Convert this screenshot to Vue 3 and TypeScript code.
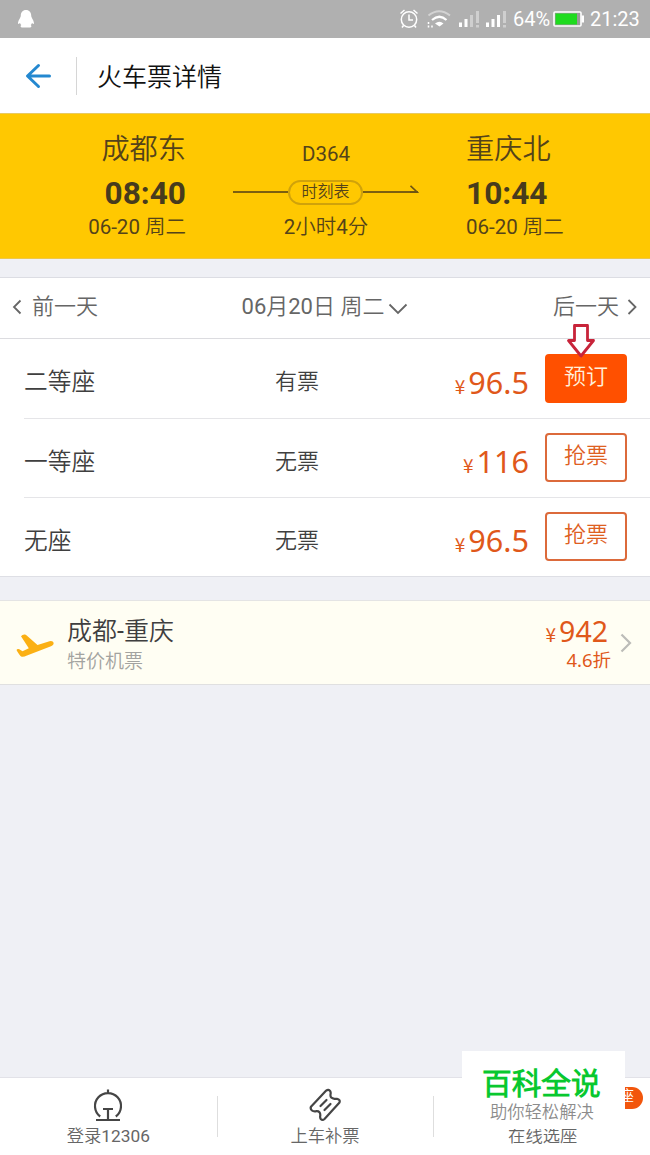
<script setup lang="ts">
interface Seat {
  name: string
  stock: string
  price: string
  action: string
  primary: boolean
}

const seats: Seat[] = [
  { name: '二等座', stock: '有票', price: '96.5', action: '预订', primary: true },
  { name: '一等座', stock: '无票', price: '116', action: '抢票', primary: false },
  { name: '无座', stock: '无票', price: '96.5', action: '抢票', primary: false },
]
</script>

<template>
  <div class="screen">
    <div class="status">
      <svg class="penguin" width="16" height="18" viewBox="0 0 16 18">
        <path d="M8 0C4.600 0 2.800 2.500 2.800 5.500C2.800 8 0 10 0 13.500C.4 14.500 1.500 13.500 2 13C2.300 14 2.800 14.600 3.300 15C2 16 2.600 17.500 4 17.500H12C13.400 17.500 14 16 12.700 15C13.200 14.600 13.700 14 14 13C14.500 13.500 15.600 14.500 16 13.500C16 10 13.200 8 13.200 5.500C13.200 2.500 11.400 0 8 0Z" fill="#fff" />
      </svg>
      <svg class="signals" width="110" height="22" viewBox="0 0 110 22" fill="none" stroke="#fff">
        <g stroke-width="1.500">
          <circle cx="10" cy="11.500" r="7.700" />
          <path d="M10 6.500V12H14M1.500 5.500L5.500 2M18.500 5.500L14.500 2M4.500 17.500L3 19.500M15.500 17.500L17 19.500" />
        </g>
        <path d="M29.500 7.500Q40 -1 51 7.500" stroke-width="2" opacity=".45" />
        <path d="M33 12Q40.500 5.500 47.500 12" stroke-width="2.200" />
        <path d="M36 15.500Q40.500 12 44.500 15.500L40.500 18.500Z" fill="#fff" stroke="none" />
        <path d="M29.500 14V16M29.500 17.500V19.500M33 17.500V19.500" stroke-width="1.500" />
        <path d="M61.500 19V14.500M67 19V11" stroke-width="3" />
        <path d="M72.500 19V7M78.500 15V3M78.500 17V19.500" stroke-width="3" opacity=".4" />
        <path d="M88.500 19V14.500M94 19V11M99.500 19V7" stroke-width="3" />
        <path d="M105.500 15V3M105.500 17V19.500" stroke-width="3" opacity=".4" />
      </svg>
      <span class="percent">64%</span>
      <svg class="battery" width="32" height="18" viewBox="0 0 32 18">
        <rect x="1" y="2" width="27" height="14" rx="1" fill="#999" stroke="#fff" stroke-width="1.600" />
        <rect x="2.500" y="3.500" width="21.500" height="11" fill="#1edb1e" />
        <rect x="28.500" y="5.500" width="2.500" height="7" fill="#fff" />
      </svg>
      <span class="clock">21:23</span>
    </div>

    <header class="header">
      <svg class="back" width="26" height="26" viewBox="0 0 26 26" fill="none" stroke="#2488d0" stroke-width="3" stroke-linecap="round" stroke-linejoin="round">
        <path d="M24.500 13H3M13.500 2.500L2.500 13L13.500 23.500" />
      </svg>
      <i class="header-line"></i>
      <h1>火车票详情</h1>
    </header>

    <section class="trip">
      <div class="stop from">
        <div class="city">成都东</div>
        <div class="time">08:40</div>
        <div class="date">06-20 周二</div>
      </div>
      <div class="route">
        <div class="train">D364</div>
        <div class="track">
          <i class="line"></i>
          <span class="timetable">时刻表</span>
          <i class="line"></i>
          <svg class="tip" width="9" height="10" viewBox="0 0 9 10" fill="none" stroke="#6e5412" stroke-width="1.700">
            <path d="M0.500 0.800L7.300 7.200H0" />
          </svg>
        </div>
        <div class="duration">2小时4分</div>
      </div>
      <div class="stop to">
        <div class="city">重庆北</div>
        <div class="time">10:44</div>
        <div class="date">06-20 周二</div>
      </div>
    </section>

    <nav class="days">
      <span class="day">
        <svg width="10" height="16" viewBox="0 0 10 16"><path d="M8.500 1.500L2 8L8.500 14.500" /></svg>
        <span class="prev">前一天</span>
      </span>
      <span class="day today">
        <span>06月20日 周二</span>
        <svg width="20" height="12" viewBox="0 0 20 12"><path d="M1.500 1.500L10 10L18.500 1.500" /></svg>
      </span>
      <span class="day">
        <span class="next">后一天</span>
        <svg width="10" height="16" viewBox="0 0 10 16"><path d="M1.500 1L8.500 8L1.500 15" /></svg>
      </span>
    </nav>

    <ul class="seats">
      <li v-for="seat in seats" :key="seat.name" class="seat">
        <span class="seat-name">{{ seat.name }}</span>
        <span class="stock">{{ seat.stock }}</span>
        <span class="price"><small>¥</small>{{ seat.price }}</span>
        <button :class="['action', { primary: seat.primary }]">{{ seat.action }}</button>
        <svg v-if="seat.primary" class="pointer" width="30" height="36" viewBox="0 0 30 36">
          <path d="M8.500 2.500H21.500V17.500H27.500L15 33L2.500 17.500H8.500Z" fill="#fff" stroke="#c8243a" stroke-width="2.800" stroke-linejoin="round" />
        </svg>
      </li>
    </ul>

    <section class="flight">
      <svg class="plane" width="38" height="24" viewBox="0 0 38 24" fill="#fbb014">
        <path d="M5 2.200Q6.500 .3 9 .6Q10.200 .8 11 1.800L21.500 11L33.500 7.200Q37 6.500 37.600 8.800Q38 11 35 12.200L11 21.500Q7 23.500 5.200 22.500Q4 22 .7 16.500Q.3 15.300 1.800 15Q3 14.700 4.500 16L6.500 17.300L12.800 14.300Z" />
      </svg>
      <div class="flight-info">
        <div class="flight-route">成都-重庆</div>
        <div class="flight-note">特价机票</div>
      </div>
      <div class="flight-cost">
        <div class="flight-price"><small>¥</small>942</div>
        <div class="discount">4.6折</div>
      </div>
      <svg class="more" width="12" height="20" viewBox="0 0 12 20" fill="none" stroke="#bcbcb8" stroke-width="2.200">
        <path d="M1.500 1.500L10 10L1.500 18.500" />
      </svg>
    </section>

    <footer class="tabs">
      <div class="tab">
        <svg width="32" height="34" viewBox="0 0 32 34" fill="none" stroke="#454545" stroke-width="2.200">
          <path d="M8.200 28.500A13 13 0 1 1 23.800 28.500M16 1.500V5M11 21H21M16 21V32M4 32H28" />
        </svg>
        <span>登录12306</span>
      </div>
      <div class="tab">
        <svg width="32" height="34" viewBox="0 0 32 34" fill="none" stroke="#454545" stroke-width="2.200" stroke-linejoin="round" stroke-linecap="round">
          <path d="M17.200 2.600Q19.500 .8 21.200 3.200Q22 4.500 21.500 6.500Q21 10.500 25.500 10.800H28Q31.500 11.500 30.500 14.500L15.500 31Q13.500 32.800 11.700 31Q10.800 29.500 11.300 27.500Q11.500 23 7.500 23.200Q4.500 23.800 3 22.500Q.8 20.500 2.200 18.500Z" />
          <path d="M11.500 18L17.500 12M15.500 22L21.500 16" />
        </svg>
        <span>上车补票</span>
      </div>
      <div class="tab pick">
        <span>在线选座</span>
        <b class="badge">选座</b>
      </div>
    </footer>

    <aside class="brand">
      <strong>百科全说</strong>
      <span>助你轻松解决</span>
    </aside>
  </div>
</template>

<style>
body {
  margin: 0;
}
</style>

<style scoped>
.screen {
  position: relative;
  box-sizing: border-box;
  width: 650px;
  height: 1155px;
  overflow: hidden;
  display: flex;
  flex-direction: column;
  background: #eff0f5;
  color: #3f3f3f;
  font-family: Roboto, "Noto Sans CJK SC DemiLight", "Noto Sans CJK SC", sans-serif;
}
.screen svg {
  flex: none;
}
.status {
  height: 38px;
  display: flex;
  align-items: center;
  background: #b0b0b0;
  color: #fff;
  font-size: 20px;
  line-height: 38px;
}
.penguin {
  margin-left: 18px;
}
.signals {
  margin-left: 365px;
}
.percent {
  width: 38px;
  margin-left: 4px;
}
.battery {
  margin-left: 2px;
}
.clock {
  margin-left: 5px;
}
.header {
  height: 76px;
  box-sizing: border-box;
  display: flex;
  align-items: center;
  background: #fff;
  border-bottom: 1px solid #e8ca62;
}
.back {
  margin-left: 25px;
}
.header-line {
  width: 1px;
  height: 38px;
  margin-left: 25px;
  background: #d6d6d6;
}
h1 {
  margin: 0 0 0 20px;
  padding-top: 4px;
  font-size: 25px;
  font-weight: 400;
  line-height: 36px;
  color: #111;
}
.trip {
  height: 145px;
  box-sizing: border-box;
  display: flex;
  background: #ffc801;
  color: #54431a;
  border-bottom: 1px solid #edc74a;
}
.stop {
  padding-top: 16px;
}
.from {
  width: 186px;
  text-align: right;
}
.to {
  margin-left: 47px;
}
.city {
  font-size: 28.2px;
  line-height: 40px;
}
.time {
  padding-top: 5px;
  font-size: 31.6px;
  font-weight: 700;
  line-height: 38px;
  color: #473b1d;
}
.date {
  font-size: 20.5px;
  line-height: 28px;
}
.route {
  width: 186px;
  margin-left: 47px;
  padding-top: 26px;
  text-align: center;
  font-size: 20.5px;
  line-height: 28px;
}
.track {
  height: 24px;
  margin-top: 12px;
  display: flex;
  align-items: center;
}
.line {
  flex: 1;
  height: 2px;
  background: #7c5f10;
}
.timetable {
  width: 71px;
  height: 21px;
  border: 2px solid #d0a20a;
  border-radius: 13px;
  font-size: 16px;
  line-height: 19px;
}
.tip {
  margin: -5px 0 0 -8px;
}
.duration {
  padding-top: 9px;
}
.days {
  height: 62px;
  box-sizing: border-box;
  margin-top: 18px;
  padding: 0 13px 2px 12px;
  display: flex;
  justify-content: space-between;
  align-items: center;
  background: #fff;
  border-top: 1px solid #dcdde3;
  border-bottom: 1px solid #dcdce0;
  color: #666;
  font-size: 22px;
  line-height: 30px;
}
.day {
  display: flex;
  align-items: center;
}
.day path {
  fill: none;
  stroke: #666;
  stroke-width: 1.800;
}
.prev {
  margin-left: 10px;
}
.next {
  margin-right: 8px;
}
.today {
  gap: 4px;
  padding-right: 1px;
}
.today svg {
  margin-top: 3px;
}
.seats {
  margin: 0;
  padding: 0;
  list-style: none;
  background: #fff;
  border-bottom: 1px solid #dedfe5;
}
.seat {
  position: relative;
  height: 79px;
  box-sizing: border-box;
  margin-left: 24px;
  padding-right: 23px;
  display: flex;
  align-items: center;
  border-bottom: 1px solid #e5e5e8;
}
.seat:first-child {
  height: 80px;
}
.seat:last-child {
  height: 78px;
  border-bottom: 0;
}
.seat-name {
  width: 251px;
  padding-top: 7px;
  font-size: 23.7px;
  line-height: 32px;
}
.stock {
  width: 100px;
  padding-top: 7px;
  font-size: 22px;
  line-height: 32px;
}
.price {
  flex: 1;
  padding: 10px 16px 0 0;
  text-align: right;
  font-family: "Noto Sans", "Noto Sans CJK SC", sans-serif;
  font-size: 30.6px;
  line-height: 36px;
  color: #e0581a;
}
.price small,
.flight-price small {
  margin-right: 3px;
  font-family: "Noto Sans CJK SC", sans-serif;
  font-size: 19px;
}
.action {
  width: 82px;
  height: 49px;
  box-sizing: border-box;
  margin-bottom: 2px;
  padding: 0 0 2px;
  border: 2px solid #dc6a3b;
  border-radius: 4px;
  background: #fff;
  color: #de601f;
  font: 22px/38px Roboto, "Noto Sans CJK SC DemiLight", "Noto Sans CJK SC", sans-serif;
}
.action.primary {
  margin-bottom: 1px;
  border-color: #ff5000;
  background: #ff5000;
  color: #fff0dc;
}
.pointer {
  position: absolute;
  left: 542px;
  top: -16px;
}
.flight {
  height: 85px;
  box-sizing: border-box;
  margin-top: 23px;
  display: flex;
  align-items: center;
  padding: 0 18px 0 16px;
  background: #fffef3;
  border-top: 1px solid #e4e4e4;
  border-bottom: 1px solid #e0e0e0;
}
.plane {
  margin-top: 6px;
}
.flight-info {
  margin-left: 13px;
  padding-top: 4px;
}
.flight-route {
  font-size: 25px;
  line-height: 34px;
}
.flight-note {
  font-size: 19px;
  line-height: 26px;
  color: #a3a3a0;
}
.flight-cost {
  margin-left: auto;
  font-family: "Noto Sans", "Noto Sans CJK SC", sans-serif;
  text-align: right;
  color: #e0581a;
}
.flight-price {
  padding: 2px 3px 0 0;
  font-size: 28.5px;
  line-height: 32px;
}
.discount {
  font-size: 18.5px;
  line-height: 19px;
  padding-bottom: 3px;
}
.more {
  margin-left: 9px;
}
.tabs {
  height: 78px;
  box-sizing: border-box;
  margin-top: auto;
  display: flex;
  background: #fff;
  border-top: 1px solid #e2e2e8;
}
.tab {
  position: relative;
  flex: 1;
  display: flex;
  flex-direction: column;
  align-items: center;
  padding-top: 10px;
  font-size: 17.3px;
  line-height: 24px;
  color: #666;
}
.tab + .tab::before {
  content: "";
  position: absolute;
  left: 0;
  top: 18px;
  width: 1px;
  height: 41px;
  background: #dedede;
}
.tab span {
  padding-top: 2px;
}
.pick span {
  padding: 36px 0 0 2px;
}
.badge {
  position: absolute;
  right: 7px;
  top: 9px;
  width: 42px;
  height: 22px;
  box-sizing: border-box;
  padding-right: 9px;
  border-radius: 11px;
  background: #f2560c;
  color: #fff;
  font-size: 15px;
  font-weight: 500;
  line-height: 19px;
  text-align: right;
}
.brand {
  position: absolute;
  left: 462px;
  top: 1051px;
  width: 163px;
  height: 78px;
  box-sizing: border-box;
  padding: 13px 0 0 20px;
  display: flex;
  flex-direction: column;
  background: #fff;
}
.brand strong {
  font-size: 29.7px;
  font-weight: 700;
  line-height: 40px;
  color: #08c82f;
}
.brand span {
  padding-left: 8px;
  font-size: 17.3px;
  line-height: 17px;
  color: #8c8c8c;
}
</style>
